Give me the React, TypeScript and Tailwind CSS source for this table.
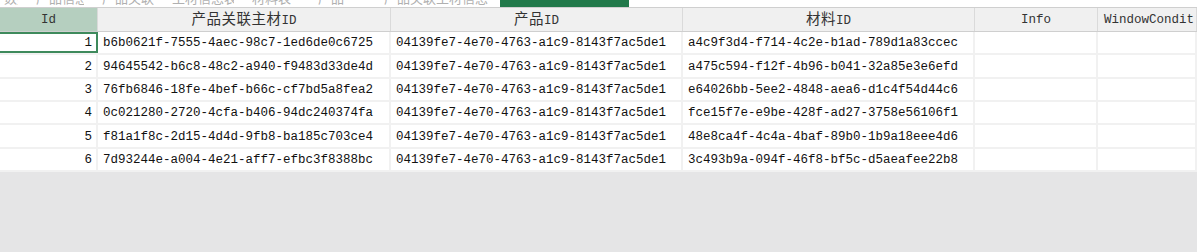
import React from "react";

type Col = { key: string; label: string; w: string };

const cols: Col[] = [
  { key: "id", label: "Id", w: "w-[98px]" },
  { key: "rel", label: "产品关联主材ID", w: "w-[293px]" },
  { key: "prod", label: "产品ID", w: "w-[292px]" },
  { key: "mat", label: "材料ID", w: "w-[292px]" },
  { key: "info", label: "Info", w: "w-[123px]" },
  { key: "win", label: "WindowCondit", w: "flex-1" },
];

const rows = [
  ["1", "b6b0621f-7555-4aec-98c7-1ed6de0c6725", "04139fe7-4e70-4763-a1c9-8143f7ac5de1", "a4c9f3d4-f714-4c2e-b1ad-789d1a83ccec"],
  ["2", "94645542-b6c8-48c2-a940-f9483d33de4d", "04139fe7-4e70-4763-a1c9-8143f7ac5de1", "a475c594-f12f-4b96-b041-32a85e3e6efd"],
  ["3", "76fb6846-18fe-4bef-b66c-cf7bd5a8fea2", "04139fe7-4e70-4763-a1c9-8143f7ac5de1", "e64026bb-5ee2-4848-aea6-d1c4f54d44c6"],
  ["4", "0c021280-2720-4cfa-b406-94dc240374fa", "04139fe7-4e70-4763-a1c9-8143f7ac5de1", "fce15f7e-e9be-428f-ad27-3758e56106f1"],
  ["5", "f81a1f8c-2d15-4d4d-9fb8-ba185c703ce4", "04139fe7-4e70-4763-a1c9-8143f7ac5de1", "48e8ca4f-4c4a-4baf-89b0-1b9a18eee4d6"],
  ["6", "7d93244e-a004-4e21-aff7-efbc3f8388bc", "04139fe7-4e70-4763-a1c9-8143f7ac5de1", "3c493b9a-094f-46f8-bf5c-d5aeafee22b8"],
];

// pitch in the shot is ~23.3px, so mix 23 and 24
const rowH = ["h-[23px]", "h-[24px]", "h-[23px]", "h-[23px]", "h-[24px]", "h-[23px]"];

const tabs = [
  { label: "数据", w: "w-[14px]" },
  { label: "产品信息表", w: "w-[48px]" },
  { label: "产品关联", w: "w-[52px]" },
  { label: "主材信息表格", w: "w-[62px]" },
  { label: "材料表", w: "w-[48px]" },
  { label: "产品", w: "w-[48px]" },
  { label: "产品关联主材信息", w: "w-[106px]" },
];

// Chinese runs get the CJK face, the rest stays monospace
function Label({ text }: { text: string }) {
  const parts = text.split(/([\u4e00-\u9fff]+)/).filter(Boolean);
  return (
    <span className="whitespace-nowrap leading-[20px]">
      {parts.map((p, i) =>
        /[\u4e00-\u9fff]/.test(p) ? (
          <span key={i} className="font-['Noto_Sans_CJK_SC',sans-serif] text-[14.5px] tracking-[0.5px]">
            {p}
          </span>
        ) : (
          <span key={i}>{p}</span>
        ),
      )}
    </span>
  );
}

export default function App() {
  return (
    <div className="flex h-[252px] w-[1197px] flex-col overflow-hidden bg-white font-['Liberation_Mono',monospace] text-[12.5px] text-[#111]">
      <div className="flex h-[7px] shrink-0 overflow-hidden bg-white">
        <div className="-mt-[10px] flex h-[16px] items-end gap-[18px] pl-[4px] text-[#b0b0b0]">
          {tabs.map((t) => (
            <span key={t.label} className={`${t.w} overflow-hidden whitespace-nowrap font-['Noto_Sans_CJK_SC',sans-serif] text-[13px] leading-[16px]`}>
              {t.label}
            </span>
          ))}
        </div>
        <div className="ml-[10px] h-full w-[129px] bg-[#21794a]" />
      </div>

      <div className="flex h-[25px] shrink-0 border-t border-b border-[#cfcfcf] bg-[#f0f0f0] text-[#333]">
        {cols.map((c, i) => (
          <div
            key={c.key}
            className={`${c.w} flex shrink-0 items-center overflow-hidden border-r border-[#dadada] ${
              i === 0 ? "justify-center bg-[#b5cfbf]" : c.key === "win" ? "justify-start pl-[6px]" : "justify-center"
            }`}
          >
            <Label text={c.label} />
          </div>
        ))}
      </div>

      <div className="shrink-0">
        {rows.map((r, ri) => (
          <div key={r[0]} className={`flex ${rowH[ri]} border-b-2 border-[#f1f1f1]`}>
            {cols.map((c, ci) => (
              <div
                key={c.key}
                className={`${c.w} flex shrink-0 items-center overflow-hidden whitespace-nowrap pt-[2px] ${
                  ci === 0 ? "justify-end pr-[4px]" : "pl-[5px]"
                } ${ri === 0 && ci === 0 ? "border-2 border-l-0 border-[#3e8a5c]" : "border-r-2 border-[#f1f1f1]"}`}
              >
                {r[ci] ?? ""}
              </div>
            ))}
          </div>
        ))}
      </div>

      <div className="flex-1 bg-[#e5e5e6]" />
    </div>
  );
}
